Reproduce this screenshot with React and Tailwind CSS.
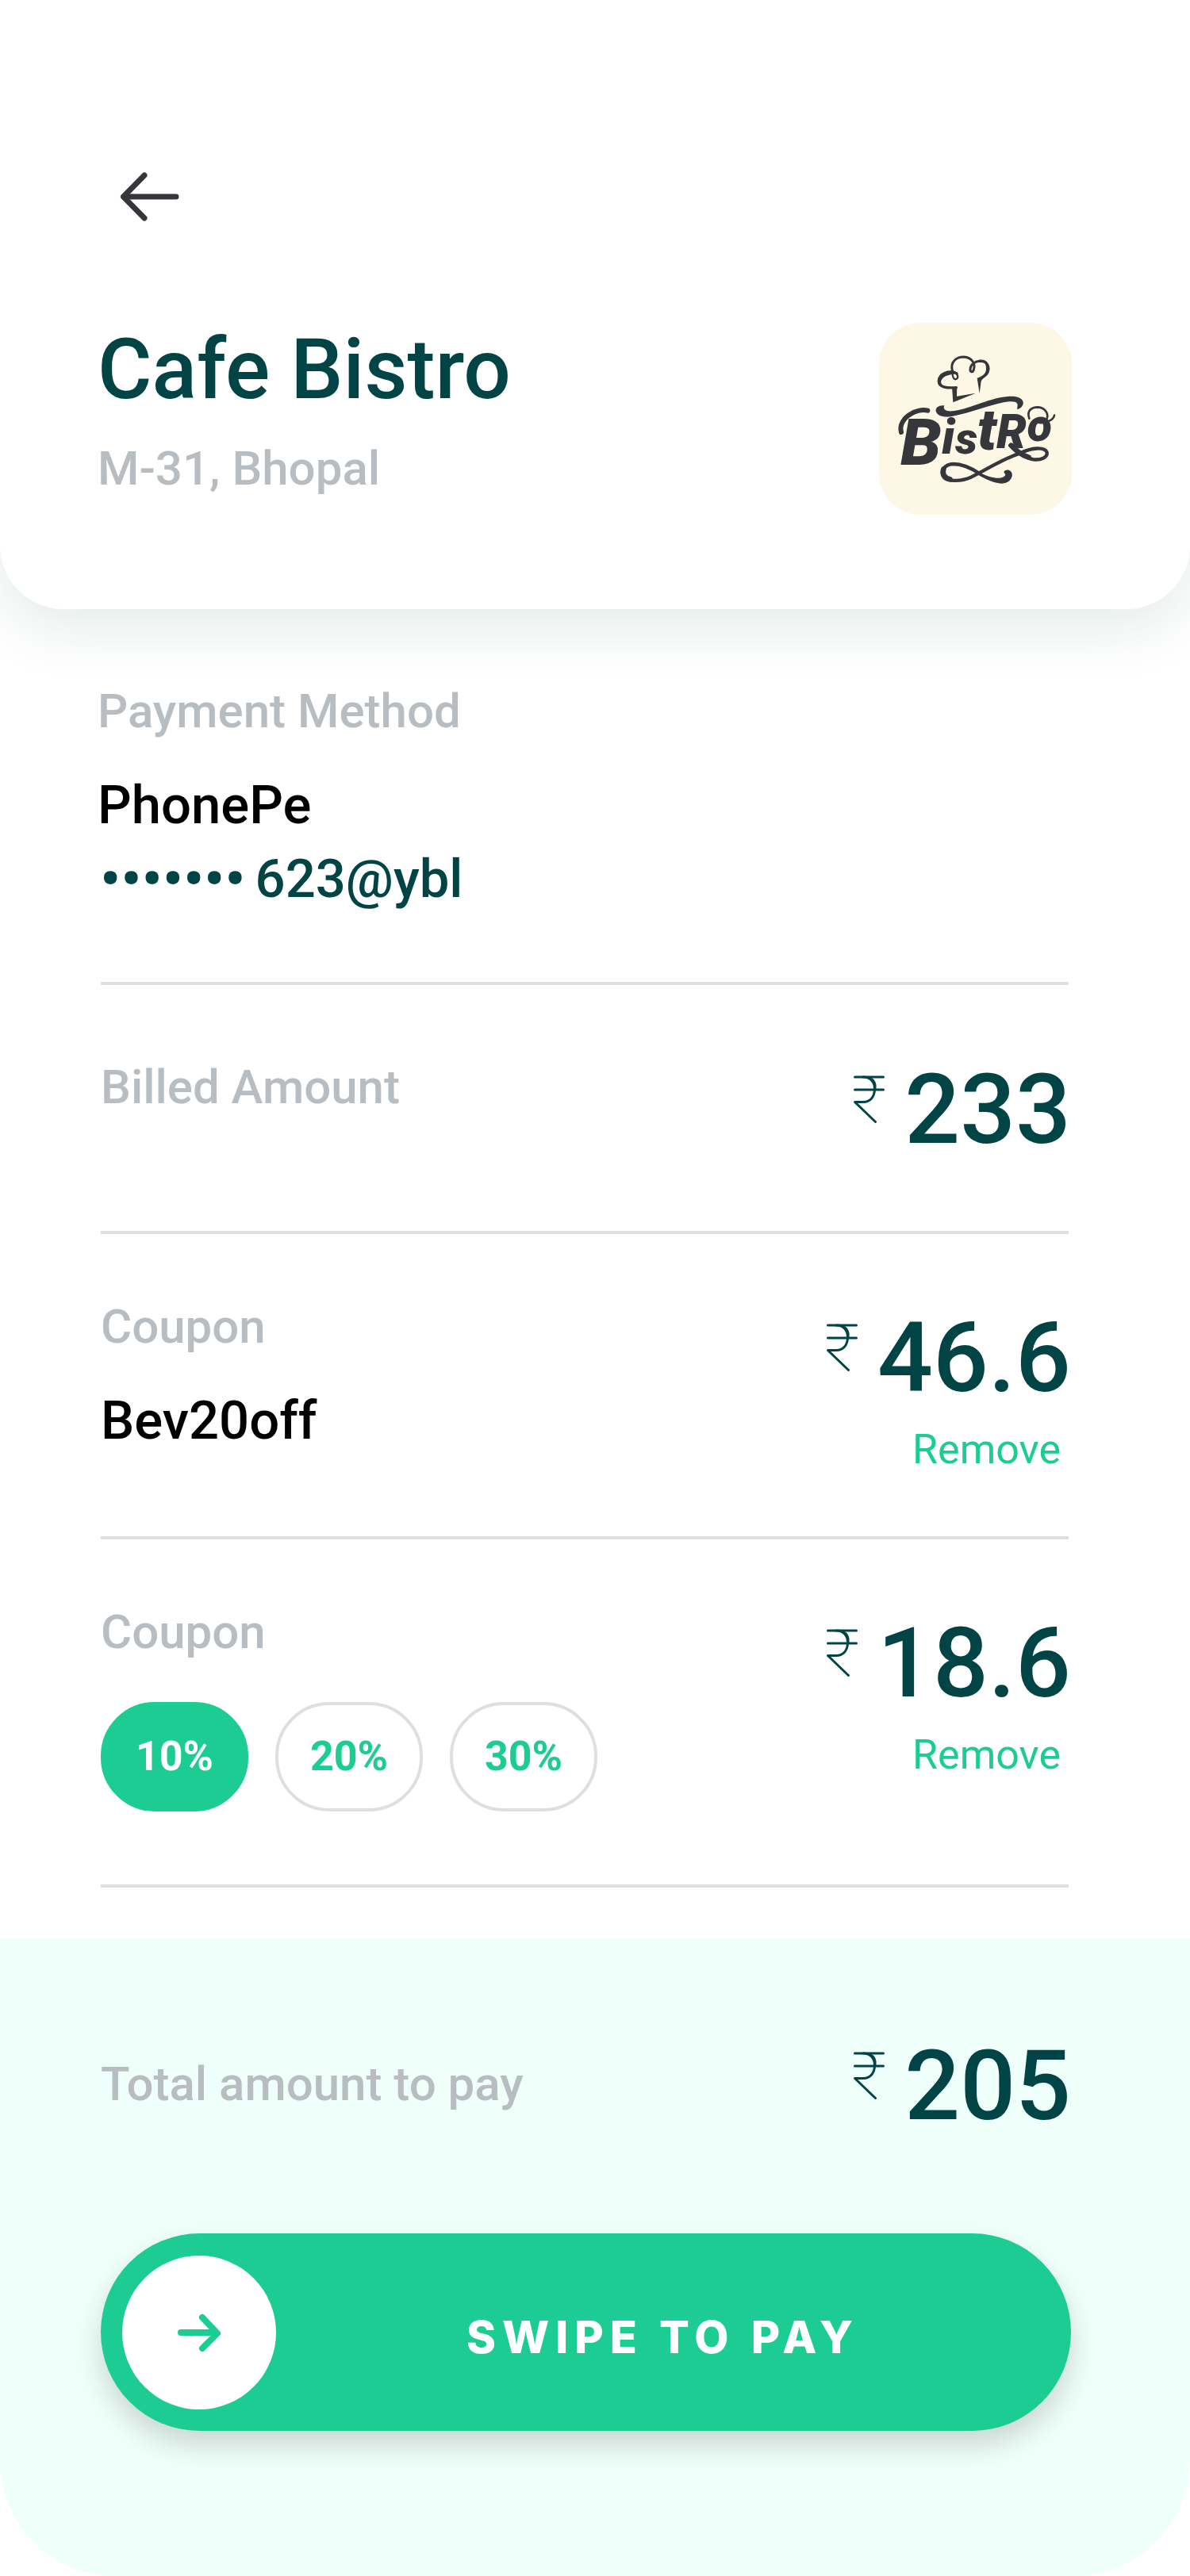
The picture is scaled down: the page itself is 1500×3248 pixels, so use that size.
import { useState } from "react";

const INK = "#36373b";

function BackArrow() {
  return (
    <svg viewBox="0 0 75 62" className="block h-[62px] w-[75px]" fill="none" stroke={INK} strokeWidth="7" strokeLinecap="round" strokeLinejoin="round" aria-hidden="true">
      <path d="M31 4 4.5 31 31 58" />
      <path d="M5 31H71" />
    </svg>
  );
}

function SwipeArrow() {
  return (
    <svg viewBox="0 0 56 48" className="block h-12 w-14" fill="none" stroke="#1dcc92" strokeWidth="8" strokeLinecap="round" strokeLinejoin="round" aria-hidden="true">
      <path d="M32 5 51 25 32 44" />
      <path d="M5 24H48" />
    </svg>
  );
}

function Rupee() {
  return (
    <svg viewBox="0 0 39 60" className="mt-[29px] block h-[60px] w-[39px] shrink-0" fill="none" stroke="#004445" strokeWidth="3" strokeLinecap="round" strokeLinejoin="round" role="img" aria-label="Rupees">
      <path d="M1.5 2H37.5M1.5 18H37.5" />
      <path d="M12 2C22 2 26.500 9 26.500 17C26.500 27 21 33.500 12 33.500H1.500L27.500 58.500" />
      <path d="M20 3C26 6 28 11 27 17" />
    </svg>
  );
}

function BistroLogo() {
  return (
    <svg viewBox="24 20 729 726" className="block h-[242px] w-[243px] shrink-0 rounded-[52px] bg-[#fdf7e5]" role="img" aria-label="Bistro logo">
      <g fill="none" stroke={INK} strokeLinecap="round" strokeLinejoin="round">
        <path strokeWidth="10" d="M318 212C290 198 251 211 250 241C250 263 280 268 316 265" />
        <path strokeWidth="7" d="M302 206C300 225 308 236 316 233C326 228 322 208 305 205" />
        <path strokeWidth="9" d="M302 204C291 168 316 149 345 149C374 151 390 174 382 198C378 210 368 206 369 195C370 178 385 166 406 164" />
        <path strokeWidth="10" d="M406 165C432 163 444 187 434 207C427 221 414 228 401 234" />
      </g>
      <g fill={INK}>
        <path d="M300 202C274 202 244 218 246 243C248 264 272 270 290 268C266 264 256 252 259 240C264 224 282 216 308 214Z" />
        <path d="M300 262H319L318 298L390 286L304 321Z" />
        <path d="M420 166C447 175 446 205 433 218C424 227 412 233 410 242L404 287L395 229C414 224 430 214 429 192C429 180 425 172 420 166Z" />
        <path d="M271 333C246 330 235 345 240 357C247 375 275 380 310 372C370 359 420 340 470 327C510 316 540 314 546 325C551 333 545 338 547 347C560 345 571 332 569 320C566 304 545 296 510 299C450 303 385 337 325 350C292 358 262 356 271 333Z" />
        <path d="M496 587C498 573 522 573 527 590C530 608 516 628 488 628C458 627 428 612 396 594C398 590 402 588 404 586C432 600 458 608 480 607C500 605 508 594 496 587Z" />
      </g>
      <g fill="none" stroke={INK} strokeLinecap="round" strokeLinejoin="round">
        <path strokeWidth="13" d="M404 590C370 568 340 554 306 554C270 555 256 582 268 602C284 624 340 618 372 604C430 576 490 536 556 514C600 492 650 488 659 510C662 530 636 540 608 537C575 532 545 505 520 484" />
        <path strokeWidth="20" d="M590 529C562 521 544 504 524 484" />
        <path strokeWidth="20" d="M268 574C262 590 270 608 292 612" />
        <path strokeWidth="8" d="M592 382C582 352 600 339 625 339C652 341 670 366 656 388C650 398 632 402 622 394C650 402 684 390 687 370" />
        <path strokeWidth="18" d="M108 434C100 408 118 380 142 366C162 352 190 347 208 352" />
      </g>
      <text fill={INK} fontFamily="Roboto, sans-serif" fontWeight="900" fontStyle="italic">
        <tspan x="106" y="556" fontSize="246">B</tspan>
        <tspan x="262" y="516" fontSize="180">i</tspan>
        <tspan x="313" y="516" fontSize="168">s</tspan>
        <tspan x="396" y="500" fontSize="216">t</tspan>
        <tspan x="468" y="494" fontSize="180">R</tspan>
        <tspan x="584" y="466" fontSize="172">o</tspan>
      </text>
    </svg>
  );
}

function Label({ children }) {
  return <p className="text-[60px] leading-[72px] font-medium text-[#b7bdc0]">{children}</p>;
}

function Amount({ value }) {
  return (
    <div className="flex items-start gap-[25px]">
      <Rupee />
      <span className="text-[123px] leading-[144px] font-medium text-[#004445]">{value}</span>
    </div>
  );
}

function Discount({ value }) {
  return (
    <div className="mt-[3px] flex flex-col items-end">
      <Amount value={value} />
      <button type="button" className="mt-3 mr-[13px] text-[52px] leading-[64px] text-[#1dcc92]">
        Remove
      </button>
    </div>
  );
}

function Section({ className, children }) {
  return (
    <section className={"mr-[3px] border-b-4 border-[#dce1e0] " + className}>
      <div className="-mr-[3px] flex items-start justify-between">{children}</div>
    </section>
  );
}

export default function App() {
  const [percent, setPercent] = useState("10%");
  return (
    <div className="flex min-h-screen flex-col overflow-hidden bg-white font-['Roboto',sans-serif]">
      <header className="rounded-b-[80px] bg-white pt-[217px] pr-[149px] pb-[119px] pl-[123px] shadow-[0_24px_72px_rgba(0,80,60,0.11)]">
        <button type="button" aria-label="Back" className="ml-7 block">
          <BackArrow />
        </button>
        <div className="mt-32 flex items-start justify-between">
          <div>
            <h1 className="text-[105px] leading-[120px] font-medium text-[#004445]">Cafe Bistro</h1>
            <div className="mt-7">
              <Label>M-31, Bhopal</Label>
            </div>
          </div>
          <BistroLogo />
        </div>
      </header>

      <main className="flex-1 pr-[150px] pb-16 pl-[127px]">
        <Section className="pt-[93px] pb-[90px]">
          <div className="-ml-1">
            <Label>Payment Method</Label>
            <p className="mt-[42px] text-[67px] leading-[80px] font-medium text-black">PhonePe</p>
            <p className="mt-[13px] flex items-center gap-3 text-[67px] leading-[80px] font-medium text-[#004445]">
              <span className="pl-[3px] text-[75px]">•••••••</span>
              <span>623@ybl</span>
            </p>
          </div>
        </Section>

        <Section className="pt-[85px] pb-[81px]">
          <div className="mt-2">
            <Label>Billed Amount</Label>
          </div>
          <Amount value="233" />
        </Section>

        <Section className="pt-[81px] pb-[77px]">
          <div>
            <Label>Coupon</Label>
            <p className="mt-[42px] text-[67px] leading-[80px] font-medium text-black">Bev20off</p>
          </div>
          <Discount value="46.6" />
        </Section>

        <Section className="pt-[81px] pb-[92px]">
          <div>
            <Label>Coupon</Label>
            <div className="mt-[52px] flex gap-[34px]" role="group" aria-label="Coupon percentage">
              {["10%", "20%", "30%"].map((p) => (
                <button
                  key={p}
                  type="button"
                  aria-pressed={p === percent}
                  onClick={() => setPercent(p)}
                  className={
                    "h-[138px] w-[186px] rounded-[68px] border-4 text-[52px] leading-[64px] font-bold " +
                    (p === percent
                      ? "border-[#1dcc92] bg-[#1dcc92] text-white"
                      : "border-[#dce1e0] bg-white text-[#1dcc92]")
                  }
                >
                  {p}
                </button>
              ))}
            </div>
          </div>
          <Discount value="18.6" />
        </Section>
      </main>

      <footer className="rounded-b-[146px] bg-[#effffa] pt-[114px] pr-[150px] pb-[183px] pl-[127px]">
        <div className="flex items-start justify-between">
          <div className="mt-[34px]">
            <Label>Total amount to pay</Label>
          </div>
          <Amount value="205" />
        </div>
        <button
          type="button"
          className="mt-[114px] flex h-[249px] w-full items-center rounded-full bg-[#1dcc92] px-[27px] shadow-[0_18px_36px_rgba(0,0,0,0.16)]"
        >
          <span className="flex size-[194px] shrink-0 items-center justify-center rounded-full bg-white">
            <SwipeArrow />
          </span>
          <span className="flex-1 pt-3 text-center font-['Inter',sans-serif] text-[56px] leading-[72px] font-extrabold tracking-[8px] text-white">
            SWIPE TO PAY
          </span>
        </button>
      </footer>
    </div>
  );
}
